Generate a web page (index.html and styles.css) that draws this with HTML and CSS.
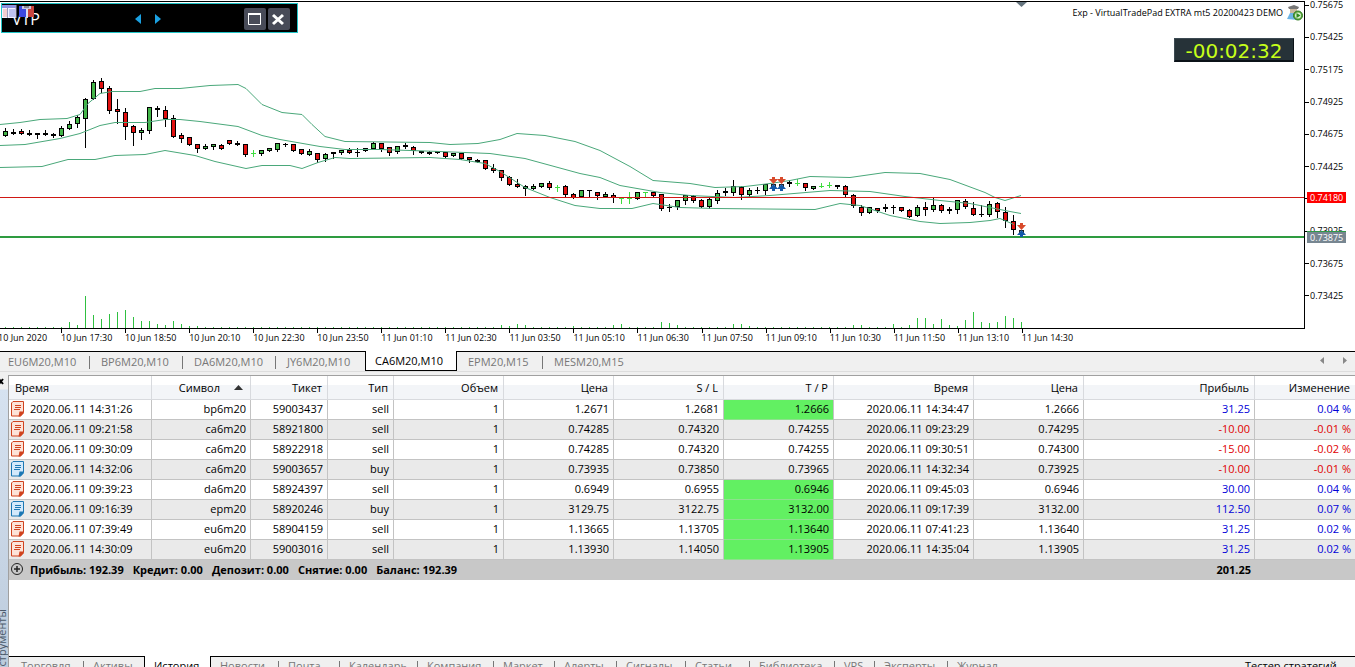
FILE: index.html
```html
<!DOCTYPE html>
<html lang="ru">
<head>
<meta charset="utf-8">
<title>VirtualTradePad</title>
<link rel="stylesheet" href="styles.css">
</head>
<body>
<svg class="defs" aria-hidden="true">
  <symbol id="note" viewBox="0 0 13 16">
    <path d="M2 .5h10.500v11l-3 3.500H.5V2z" fill="var(--paper)" stroke="currentColor" stroke-linejoin="round"/>
    <path d="M4 4.500h6M4 6.500h6M3 8.500h6" stroke="currentColor" fill="none"/>
    <path d="M12.500 10.500v2l-3 3H7.500l1-5z" fill="currentColor"/>
  </symbol>
</svg>
<main class="terminal">
  <section class="chart">
    <div class="plot">
      <svg class="plot-art" id="plot" viewBox="0 0 1304 328" preserveAspectRatio="none" aria-label="CA6M20, M10"></svg>
      <header class="pad">
        <strong class="pad-name">VTP</strong>
        <svg class="pad-icons" viewBox="0 0 32 14" aria-hidden="true">
          <path d="M0 0h14v13H0z" fill="#f4f2ff"/><path d="M0 0h14v3H0z" fill="#8d8fe0"/>
          <path d="M1 5h4M1 7h4M1 9h4M1 11h4" stroke="#f0a8a0"/><path d="M7 5h6M7 7h6M7 9h6M7 11h6" stroke="#8a92e0"/>
          <path d="M5.500 3v10M14 0v13" stroke="#99b"/>
          <path d="M17 1h8v11h-8z" fill="#3c48e0"/><path d="M25 1h7v11h-7z" fill="#c8453e"/>
          <path d="M20 1h9v3h-9z" fill="#c8c8e0"/><path d="M22 2h5" stroke="#444"/><path d="M24 4h2v9h-2z" fill="#dde"/>
        </svg>
        <span class="pad-nav">
          <button aria-label="Назад"><svg width="7" height="12" viewBox="0 0 7 12"><path d="M6 1v10L0 6z" fill="#1ba1e2"/></svg></button>
          <button aria-label="Вперёд"><svg width="7" height="12" viewBox="0 0 7 12"><path d="M1 1v10l6-5z" fill="#1ba1e2"/></svg></button>
        </span>
        <button class="pad-btn" aria-label="Развернуть"><svg width="22" height="22" viewBox="0 0 22 22"><path d="M4.500 6.500h12v10h-12z" fill="none" stroke="#fff"/><path d="M4 6h13" stroke="#fff" stroke-width="2"/></svg></button>
        <button class="pad-btn" aria-label="Закрыть"><svg width="22" height="22" viewBox="0 0 22 22"><path d="M5 7l10 9M15 7L5 16" stroke="#fff" stroke-width="3"/></svg></button>
      </header>
      <div class="expert">
        <span>Exp - VirtualTradePad EXTRA mt5 20200423 DEMO</span>
        <svg width="16" height="16" viewBox="0 0 16 16" aria-hidden="true">
          <path d="M1 2l6-2 5 2-1 2H2z" fill="#777"/><path d="M3 4h7v4H3z" fill="#c9b8a0"/><path d="M0 14l3-6h6l2 7z" fill="#6db4e4"/>
          <circle cx="11" cy="10.500" r="4.500" fill="#5aa83c" stroke="#2f7a20"/><circle cx="11" cy="10.500" r="3" fill="#d8efcf"/><path d="M9.500 8l4 2.500-4 2.500z" fill="#2f8a20"/>
        </svg>
      </div>
      <div class="timer">-00:02:32</div>
    </div>
    <div class="prices">
      <span>0.75675</span><span>0.75425</span><span>0.75175</span><span>0.74925</span><span>0.74675</span>
      <span>0.74425</span><span></span><span>0.73925</span><span>0.73675</span><span>0.73425</span>
      <b class="price-tag ask">0.74180</b>
      <b class="price-tag bid">0.73875</b>
    </div>
    <div class="times">
      <span class="cut">10 Jun 2020</span><span>10 Jun 17:30</span><span>10 Jun 18:50</span><span>10 Jun 20:10</span><span>10 Jun 22:30</span><span>10 Jun 23:50</span><span>11 Jun 01:10</span><span>11 Jun 02:30</span><span>11 Jun 03:50</span><span>11 Jun 05:10</span><span>11 Jun 06:30</span><span>11 Jun 07:50</span><span>11 Jun 09:10</span><span>11 Jun 10:30</span><span>11 Jun 11:50</span><span>11 Jun 13:10</span><span>11 Jun 14:30</span>
    </div>
  </section>

  <nav class="chart-tabs">
    <button>EU6M20,M10</button><button>BP6M20,M10</button><button>DA6M20,M10</button><button class="last">JY6M20,M10</button><button class="active">CA6M20,M10</button><button>EPM20,M15</button><button class="last">MESM20,M15</button>
    <svg class="scroll" width="30" height="10" viewBox="0 0 30 10" aria-hidden="true"><path d="M5 1v7L1 4.500zM24 1v7l4-3.500z" fill="#888"/></svg>
  </nav>

  <section class="toolbox">
    <aside class="rail"><button class="rail-close" aria-label="Закрыть"><svg width="5" height="7" viewBox="0 0 5 7"><path d="M-1 1l4 5M3 1l-4 5" stroke="#000" stroke-width="2"/></svg></button><span class="rail-name">Инструменты</span></aside>
    <div class="panel">
      <table class="deals">
        <colgroup><col class="c-open"><col class="c-symbol"><col class="c-ticket"><col class="c-type"><col class="c-num"><col class="c-num"><col class="c-num"><col class="c-num"><col class="c-close"><col class="c-num"><col class="c-profit"><col class="c-change"></colgroup>
        <thead><tr><th>Время</th><th>Символ<svg class="sort" width="9" height="5" viewBox="0 0 9 5" aria-hidden="true"><path d="M0 5L4.500 0 9 5z" fill="#333"/></svg></th><th>Тикет</th><th>Тип</th><th>Объем</th><th>Цена</th><th>S / L</th><th>T / P</th><th>Время</th><th>Цена</th><th>Прибыль</th><th>Изменение</th></tr></thead>
        <tbody>
          <tr><td><svg class="note"><use href="#note"/></svg>2020.06.11 14:31:26</td><td>bp6m20</td><td>59003437</td><td>sell</td><td>1</td><td>1.2671</td><td>1.2681</td><td class="hit">1.2666</td><td>2020.06.11 14:34:47</td><td>1.2666</td><td class="up">31.25</td><td class="up">0.04 %</td></tr>
          <tr><td><svg class="note"><use href="#note"/></svg>2020.06.11 09:21:58</td><td>ca6m20</td><td>58921800</td><td>sell</td><td>1</td><td>0.74285</td><td>0.74320</td><td>0.74255</td><td>2020.06.11 09:23:29</td><td>0.74295</td><td class="down">-10.00</td><td class="down">-0.01 %</td></tr>
          <tr><td><svg class="note"><use href="#note"/></svg>2020.06.11 09:30:09</td><td>ca6m20</td><td>58922918</td><td>sell</td><td>1</td><td>0.74285</td><td>0.74320</td><td>0.74255</td><td>2020.06.11 09:30:51</td><td>0.74300</td><td class="down">-15.00</td><td class="down">-0.02 %</td></tr>
          <tr><td><svg class="note buy"><use href="#note"/></svg>2020.06.11 14:32:06</td><td>ca6m20</td><td>59003657</td><td>buy</td><td>1</td><td>0.73935</td><td>0.73850</td><td>0.73965</td><td>2020.06.11 14:32:34</td><td>0.73925</td><td class="down">-10.00</td><td class="down">-0.01 %</td></tr>
          <tr><td><svg class="note"><use href="#note"/></svg>2020.06.11 09:39:23</td><td>da6m20</td><td>58924397</td><td>sell</td><td>1</td><td>0.6949</td><td>0.6955</td><td class="hit">0.6946</td><td>2020.06.11 09:45:03</td><td>0.6946</td><td class="up">30.00</td><td class="up">0.04 %</td></tr>
          <tr><td><svg class="note buy"><use href="#note"/></svg>2020.06.11 09:16:39</td><td>epm20</td><td>58920246</td><td>buy</td><td>1</td><td>3129.75</td><td>3122.75</td><td class="hit">3132.00</td><td>2020.06.11 09:17:39</td><td>3132.00</td><td class="up">112.50</td><td class="up">0.07 %</td></tr>
          <tr><td><svg class="note"><use href="#note"/></svg>2020.06.11 07:39:49</td><td>eu6m20</td><td>58904159</td><td>sell</td><td>1</td><td>1.13665</td><td>1.13705</td><td class="hit">1.13640</td><td>2020.06.11 07:41:23</td><td>1.13640</td><td class="up">31.25</td><td class="up">0.02 %</td></tr>
          <tr><td><svg class="note"><use href="#note"/></svg>2020.06.11 14:30:09</td><td>eu6m20</td><td>59003016</td><td>sell</td><td>1</td><td>1.13930</td><td>1.14050</td><td class="hit">1.13905</td><td>2020.06.11 14:35:04</td><td>1.13905</td><td class="up">31.25</td><td class="up">0.02 %</td></tr>
        </tbody>
        <tfoot><tr><td colspan="10"><div class="summary"><svg class="plus" width="12" height="12" viewBox="0 0 12 12" aria-hidden="true"><circle cx="6" cy="6" r="5.500" fill="none" stroke="#222"/><path d="M3 6h6M6 3v6" stroke="#222" stroke-width="1.500"/></svg><span>Прибыль: 192.39</span><span>Кредит: 0.00</span><span>Депозит: 0.00</span><span>Снятие: 0.00</span><span>Баланс: 192.39</span></div></td><td>201.25</td><td></td></tr></tfoot>
      </table>
      <nav class="tool-tabs">
        <button>Торговля</button><button class="last">Активы</button><button class="active">История</button><button>Новости</button><button>Почта</button><button>Календарь</button><button>Компания</button><button>Маркет</button><button>Алерты</button><button>Сигналы</button><button>Статьи</button><button>Библиотека</button><button>VPS</button><button>Эксперты</button><button class="last">Журнал</button><button class="tester">Тестер стратегий</button>
      </nav>
    </div>
  </section>
</main>
<script src="chart.js"></script>
</body>
</html>
```
FILE: styles.css
```css
* { box-sizing: border-box; }
body { margin: 0; background: #fff; color: #000; font: 11px/20px "Open Sans", "Noto Sans", sans-serif; }
button { margin: 0; padding: 0; border: 0; background: none; color: inherit; font: inherit; text-align: left; }
svg { display: block; }
.defs { position: absolute; width: 0; height: 0; }
.terminal { display: flex; flex-direction: column; height: 100vh; overflow: hidden; }

/* chart */
.chart { display: grid; grid-template-columns: 1fr 50px; grid-template-rows: 328px 21px; padding-top: 1px; font-size: 9px; line-height: 12px; }
.plot { position: relative; border: solid #000; border-width: 1px 1px 1px 0; }
.plot-art { position: absolute; left: 0; top: -2px; width: 100%; height: 328px; }
.pad { position: absolute; left: 1px; top: 1px; width: 297px; height: 30px; display: flex; align-items: center; gap: 2px; padding: 1px 7px 0 10px; background: #000; border: 1px solid #22c5c8; }
.pad-icons { position: absolute; left: 0; top: 1px; width: 32px; height: 14px; }
.pad-name { font: 16px/20px "Open Sans", sans-serif; color: #fff; }
.pad-nav { display: flex; flex: 1; gap: 12px; justify-content: center; padding-left: 13px; }
.pad-btn { width: 22px; height: 22px; background: #484b58; border-radius: 2px; }
.expert { position: absolute; top: 2px; right: 1px; display: flex; align-items: center; gap: 4px; height: 18px; }
.timer { position: absolute; top: 36px; right: 10px; width: 120px; height: 24px; border: 1px solid #3c4a52; border-right-color: #0b1218; border-bottom: 2px solid #0b1218; background: #263238; color: #c6ff1a; font: 20px/24px "DejaVu Sans", sans-serif; text-align: center; }
.prices { position: relative; display: grid; grid-auto-rows: 1fr; height: 323px; margin-top: -12px; }
.prices span { display: flex; align-items: center; gap: 1px; }
.prices span::before { content: ""; width: 4px; height: 1px; background: #000; }
.price-tag { position: absolute; left: 2px; width: 39px; padding-left: 3px; font-weight: 400; line-height: 11px; color: #fff; }
.ask { top: 203px; background: #f00; }
.bid { top: 242px; background: #778691; border-top: 1px solid #2e9b48; }
.times { display: grid; grid-template-columns: 61fr repeat(15, 64fr) 283fr; overflow: hidden; }
.times span { min-width: 0; padding-top: 3px; white-space: nowrap; background: linear-gradient(#000, #000) no-repeat 0 0 / 1px 4px; }
.times .cut { display: flex; justify-content: flex-end; padding-right: 14px; background: none; }

/* tab strips */
.chart-tabs, .tool-tabs { display: grid; background: #f0f0f0; color: #777; white-space: nowrap; }
.chart-tabs { grid-template-columns: 90px 93px 93px 89px 92px 86px 97px 1fr; height: 21px; margin-top: 1px; flex: none; border-bottom: 1px solid #ddd; background: linear-gradient(#000, #000) no-repeat 0 0 / 100% 1px #f0f0f0; line-height: 19px; }
.chart-tabs button, .tool-tabs button { position: relative; padding-left: 11px; border-top: 1px solid #000; }
.chart-tabs button:first-child { padding-left: 8px; }
.chart-tabs button::after, .tool-tabs button::after { content: ""; position: absolute; right: 0; top: 4px; width: 1px; height: 13px; background: #777; }
.chart-tabs .last::after, .chart-tabs .active::after, .tool-tabs .last::after, .tool-tabs .active::after, .tool-tabs .tester::after { display: none; }
.chart-tabs .active { background: #fff; color: #000; border: solid #000; border-width: 0 1px 1px; padding-left: 9px; }
.scroll { justify-self: end; align-self: center; margin-right: 6px; }

/* toolbox */
.toolbox { display: flex; flex: 1; min-height: 0; padding-top: 3px; background: #f0f0f0; }
.rail { position: relative; flex: none; width: 8px; background: linear-gradient(#f0f0f0 14px, #d6e2f0 15px, #bccbdc); overflow: hidden; }
.rail-close { position: absolute; left: 0; top: 3px; }
.rail-name { position: absolute; right: -4px; top: 234px; writing-mode: vertical-rl; transform: rotate(180deg); color: #4b5a6b; }
.panel { display: flex; flex-direction: column; flex: 1; min-width: 0; border: solid #a0a0a0; border-width: 1px 0 0 1px; background: #fff; }
.deals { width: 100%; table-layout: fixed; border-collapse: separate; border-spacing: 0; text-align: right; white-space: nowrap; }
.c-open { width: 143px; } .c-symbol { width: 99px; } .c-ticket { width: 77px; } .c-type { width: 66px; }
.c-num { width: 110px; } .c-close { width: 140px; } .c-profit { width: 171px; } .c-change { width: 100px; }
.deals th { height: 24px; padding: 0 5px 0 6px; font-weight: 400; text-align: right; border: solid #d8dade; border-width: 0 1px 1px 0; background: linear-gradient(#fff 40%, #f3f5f8 41%, #f3f5f8); }
.deals th:first-child { text-align: left; }
.deals th:last-child { border-right: 0; }
.sort { display: inline-block; margin: 0 2px 2px 14px; vertical-align: middle; }
.deals td { height: 20px; padding: 0 4px 2px 0; line-height: 17px; border: solid #c3c3c3; border-width: 0 1px 1px 0; }
.deals tbody td:first-child { display: flex; gap: 6px; padding-left: 2px; align-items: center; }
.deals td:last-child { border-right: 0; }
.deals tbody tr:nth-child(even) { background: #eaeaea; }
.note { width: 13px; height: 16px; color: #d0431f; --paper: #fde3d8; }
.note.buy { color: #1c78b4; --paper: #d3e9fb; }
.deals .hit { background: #62f062; border-bottom-color: #8ee08e; }
.up { color: #0000d8; }
.down { color: #e00000; }
.deals tfoot td { height: 20px; background: #c8c8c8; border: 0; font-weight: 700; }
.summary { display: flex; gap: 9px; padding-left: 2px; align-items: center; }
.plus { margin-right: -2px; }
.tool-tabs { grid-template-columns: 75px 60px 67px 68px 61px 78px 76px 61px 62px 69px 64px 85px 40px 73px 1fr 110px; height: 11px; margin-top: auto; overflow: hidden; line-height: 16px; }
.tool-tabs button { padding-left: 9px; height: 18px; }
.tool-tabs button:first-child { padding-left: 12px; }
.tool-tabs .active { border: solid #000; border-width: 0 1px; background: #fff; color: #000; padding-top: 1px; }
.tool-tabs .tester { padding-left: 0; color: #000; }
```
FILE: chart.js
```js
// kind: g rising, r falling, k flat, p green cross, m trade marker; then high, top, bottom, low
const candles = `g128,131,136,136 k129,132,134,134 r129,131,134,134 k130,133,135,135 k133,133,135,138 k130,133,135,135 k133,134,136,137
g126,128,136,136 g121,124,129,129 g115,117,124,127 g98,99,119,147 g80,82,99,99 r78,81,89,92 r86,88,111,113 r99,109,112,123 r108,112,127,139
r125,126,133,145 g128,130,133,139 g107,107,131,133 k106,108,110,116 r106,110,119,126 r115,118,137,137 r133,135,139,142 r137,137,145,145
r144,144,149,152 g144,146,149,149 g144,144,147,149 r144,145,149,149 r140,140,144,144 k141,143,145,145 r144,144,155,156 p150,153,154,156
g150,150,154,155 g148,148,151,151 g143,143,150,151 k143,144,145,146 r144,144,151,151 r149,149,154,154 g149,151,155,155 r153,153,160,162
g153,154,159,161 k152,152,154,158 g150,150,153,154 r148,150,153,153 k148,152,153,156 g148,148,151,151 g142,143,149,149 r143,143,149,151
r147,147,153,155 g146,146,152,153 k143,145,147,148 r146,147,151,154 r151,151,153,153 k151,152,154,154 k151,151,153,153 r152,152,157,157
g153,153,156,156 r153,153,159,159 r157,157,160,162 k159,160,162,162 r160,160,169,169 r164,168,171,172 r170,170,178,180 r176,177,185,185
r179,184,187,187 g185,186,189,195 g184,186,189,189 g183,183,187,187 r181,183,188,189 p185,187,188,191 r185,186,195,197 r193,194,198,198
g190,190,197,197 k190,190,191,197 r192,192,196,199 g192,194,197,197 r193,195,198,202 p197,198,199,203 p192,198,199,203 g192,192,199,199
p192,192,193,197 r192,192,196,197 r194,194,209,210 k204,207,208,211 g200,200,207,209 g195,195,201,204 r195,196,201,202 r199,200,207,207
g197,199,207,208 g190,193,201,203 k188,191,193,195 g180,186,193,195 r186,187,195,199 g188,190,195,196 k187,190,191,193 g184,184,191,194
m180,0,0,188 m180,0,0,188 k180,182,184,186 p179,183,184,185 r183,183,188,190 g186,186,189,189 p183,186,187,187 p182,185,186,187
k185,185,187,188 r185,186,195,196 r194,195,206,207 r205,207,213,215 g207,207,213,213 r208,208,211,212 k204,207,209,211 k205,207,208,213
r207,207,211,211 r209,210,217,217 g205,207,216,216 r202,207,210,215 g198,205,210,211 r204,205,211,212 k207,209,211,213 g200,200,210,213
r199,201,207,208 r202,208,215,215 k205,214,215,216 g201,204,215,216 r202,203,212,217 r207,212,221,227 r215,221,230,234 m226,0,0,234`.split(/\s+/);
const bands = [
  '0,124 20,122 40,119 67,118 80,114 88,103 100,93 112,91 140,91 155,88 180,88 210,85 238,84 246,88 262,104 282,112 302,114 312,124 325,136 345,141 430,142 450,144 478,143 500,139 517,133 545,135 575,141 600,150 630,166 653,180 690,183 715,187 745,186 770,183 790,180 810,176 850,177 885,172 920,173 950,179 985,192 995,197 1005,200 1021,195',
  '0,145 25,144 60,138 80,133 100,125 115,122 145,122 165,119 180,119 200,121 238,126 262,135 280,139 320,146 345,149 380,149 440,151 490,153 525,158 580,173 600,177 620,185 660,192 690,195 735,197 770,195 830,190 870,191 905,196 940,200 970,203 1010,211 1021,213',
  '0,167 42,166 68,159 95,159 115,155 145,154 165,150 195,155 215,161 246,168 262,165 290,165 302,168 318,162 335,157 350,158 430,157 460,159 485,163 500,171 525,187 550,197 575,205 600,208 632,208 653,203 680,207 715,208 815,209 840,203 860,205 890,215 920,221 940,223 970,222 990,220 1000,218 1014,224'
];
const volumes = { 69: 6, 77: 3, 85: 32, 93: 13, 101: 9, 109: 14, 117: 16, 125: 18, 133: 11, 141: 7, 149: 7, 157: 4, 165: 3, 173: 7, 181: 4, 189: 2, 197: 2, 501: 3, 509: 2, 517: 4, 525: 3, 573: 2, 613: 3, 621: 4, 661: 6, 669: 5, 677: 3, 733: 4, 741: 4, 749: 2, 853: 3, 861: 3, 893: 4, 909: 3, 917: 10, 925: 10, 933: 4, 941: 9, 949: 3, 957: 2, 965: 8, 973: 16, 981: 6, 989: 5, 997: 6, 1005: 12, 1013: 10, 1021: 6 };
const rect = (x, y, w, h, fill) => `<rect x="${x}" y="${y}" width="${w}" height="${h}" fill="${fill}"/>`;
const arrow = (x, y, dir, fill) => `<path transform="translate(${x + 0.5} ${y}) scale(1 ${dir})" fill="${fill}" d="M-1.500-3h3v2h3L0 4-4.500-1h3z"/>`;

let body = '', marks = '', bars = '';
candles.forEach((text, i) => {
  const x = 5 + 8 * i;
  const [high, top, bottom, low] = text.slice(1).split(',').map(Number);
  const kind = text[0];
  bars += `M${x + 0.5} 328v-${volumes[x] || 1}`;
  if (kind === 'm') {
    marks += rect(x - 2, high + 4, 5, 1, '#222') + rect(x - 2, high + 4, 1, 3, '#222') + rect(x + 2, high + 4, 1, 3, '#222');
    marks += arrow(x, high, 1, '#d84a2b') + arrow(x, low, -1, '#1258a8');
    return;
  }
  const ink = kind === 'p' ? '#3fdc3f' : '#000';
  body += rect(x, high, 1, Math.max(1, low - high + 1), ink) + rect(x - 2, top, 5, Math.max(1, bottom - top), ink);
  if (kind === 'g' || kind === 'r') body += rect(x - 1, top + 1, 3, bottom - top - 2, kind === 'g' ? '#43b649' : '#e01010');
});
const lines = bands.map(points => `<polyline points="${points}" transform="translate(0 .5)" fill="none" stroke="#4aa87a"/>`).join('');
document.getElementById('plot').innerHTML =
  `<path d="${bars}" fill="none" stroke="#2fc040"/>` + body + lines +
  '<path d="M0 197.500H1304" fill="none" stroke="#d01814"/>' + rect(0, 236, 1304, 2, '#2e9b40') + marks +
  '<path d="M1016 2h11l-5.500 5z" fill="#66757f"/>';
```
